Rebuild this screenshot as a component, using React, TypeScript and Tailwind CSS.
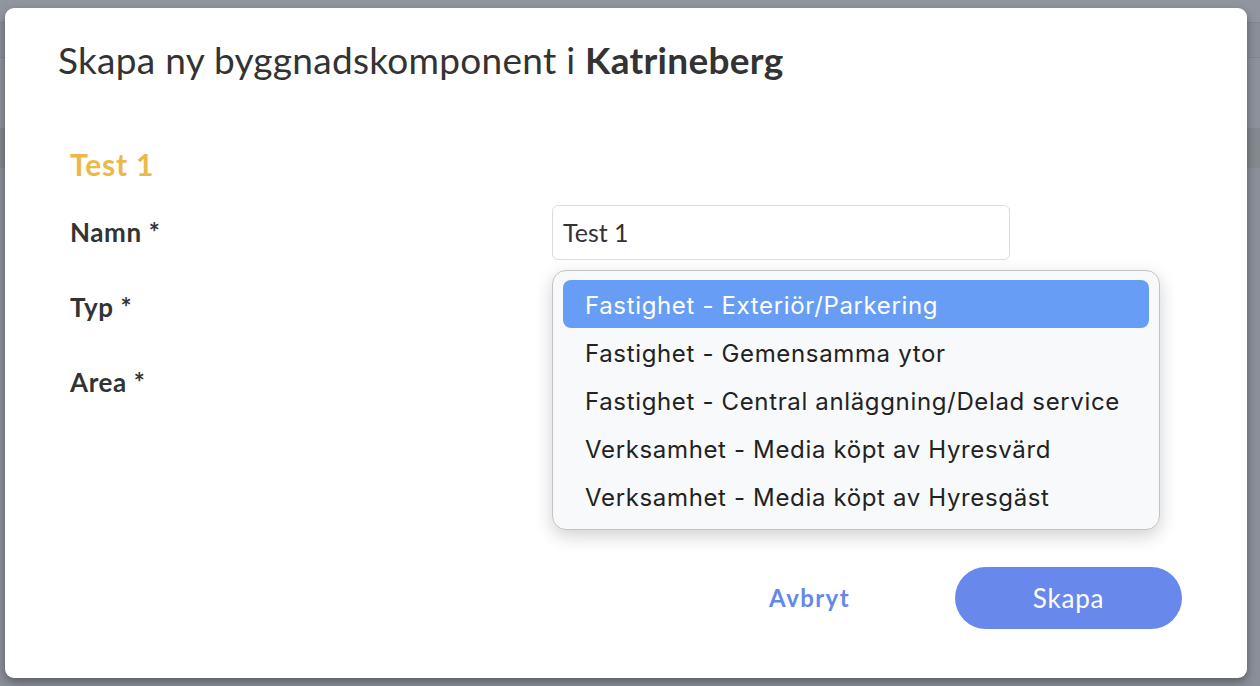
import React from "react";

const options = [
  "Fastighet - Exteriör/Parkering",
  "Fastighet - Gemensamma ytor",
  "Fastighet - Central anläggning/Delad service",
  "Verksamhet - Media köpt av Hyresvärd",
  "Verksamhet - Media köpt av Hyresgäst",
];

const pageFont = { fontFamily: '"Lato", "Open Sans", sans-serif' };
const menuFont = { fontFamily: 'Inter, "Noto Sans", sans-serif' };

export default function App() {
  return (
    <div className="relative w-[1260px] h-[686px] overflow-hidden bg-[#8b8f99]" style={pageFont}>
      {/* dimmed page behind the dialog */}
      <div className="absolute inset-0 flex flex-col">
        <div className="h-[22px] bg-[#9095a0]" />
        <div className="h-[36px] bg-[#8a8e98] border-y border-[#82868f]" />
        <div className="h-[70px] bg-[#8d919b]" />
        <div className="h-[40px] bg-[#84888f]" />
        <div className="flex-1 bg-[#8b8f99]" />
      </div>

      <div className="relative pl-[5px] pt-[8px]">
        <div className="w-[1242px] h-[670px] rounded-[9px] bg-white shadow-[0_4px_10px_rgba(0,0,0,0.35)] flex flex-col">
          <h1 className="pl-[53px] pt-[27px] text-[37px] leading-[50px] text-[#333] font-normal tracking-[0.28px]">
            Skapa ny byggnadskomponent i <span className="font-bold">Katrineberg</span>
          </h1>

          <div className="pl-[65px] pt-[59px]">
            <h2 className="text-[30px] leading-[40px] font-bold text-[#ecb84a] tracking-[0.8px]">Test 1</h2>

            <div className="mt-[21px] grid grid-cols-[482px_458px] gap-y-[20px] items-center">
              <label className="text-[26px] font-bold text-[#333] tracking-[0.6px]">Namn *</label>
              <div className="h-[55px] rounded-[6px] border border-[#dcdcdc] flex items-center px-[10px] text-[25px] text-[#333]">
                Test 1
              </div>

              <label className="text-[26px] font-bold text-[#333] tracking-[0.6px]">Typ *</label>
              <div className="relative h-[55px]">
                <div className="h-full rounded-[6px] border-2 border-[#4a7ff0]" />
                {/* open options menu */}
                <div
                  className="absolute left-0 top-[-10px] w-[608px] rounded-[14px] border border-[#c4c4c6] bg-[#f8f9fb] shadow-[0_6px_18px_rgba(0,0,0,0.18)] px-[10px] py-[9px] flex flex-col"
                  style={menuFont}
                >
                  {options.map((o, i) => (
                    <div
                      key={o}
                      className={
                        i === 0
                          ? "h-[48px] rounded-[8px] bg-[#689df6] text-white flex items-center px-[22px] pt-[3px] text-[24px] tracking-[0.65px]"
                          : "h-[48px] flex items-center px-[22px] pt-[3px] text-[24px] tracking-[0.65px] text-[#222]"
                      }
                    >
                      {o}
                    </div>
                  ))}
                </div>
              </div>

              <label className="text-[26px] font-bold text-[#333] tracking-[0.6px]">Area *</label>
              <div className="h-[55px]" />
            </div>
          </div>

          <div className="mt-auto mb-[49px] mr-[65px] flex justify-end items-center gap-[105px]">
            <button className="text-[24px] font-bold text-[#6488e8] tracking-[1.4px]">Avbryt</button>
            <button className="w-[227px] h-[62px] rounded-full bg-[#6889eb] text-white text-[26px] tracking-[0.8px]">
              Skapa
            </button>
          </div>
        </div>
      </div>
    </div>
  );
}
